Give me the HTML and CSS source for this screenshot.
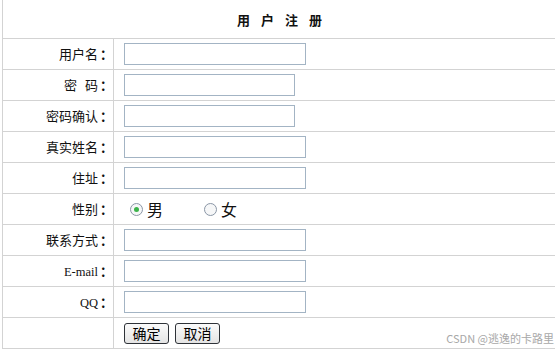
FILE: index.html
```html
<!DOCTYPE html>
<html lang="zh">
<head>
<meta charset="utf-8">
<link rel="stylesheet" href="styles.css">
</head>
<body>
<table class="reg">
  <tr class="title-row"><th colspan="2">用 户 注 册</th></tr>
  <tr><td class="lbl">用户名<b>：</b></td><td class="fld"><input class="w182" type="text"></td></tr>
  <tr><td class="lbl"><span class="sp">密 码</span><b>：</b></td><td class="fld"><input class="w171" type="password"></td></tr>
  <tr><td class="lbl">密码确认<b>：</b></td><td class="fld"><input class="w171" type="password"></td></tr>
  <tr><td class="lbl">真实姓名<b>：</b></td><td class="fld"><input class="w182" type="text"></td></tr>
  <tr><td class="lbl">住址<b>：</b></td><td class="fld"><input class="w182" type="text"></td></tr>
  <tr><td class="lbl">性别<b>：</b></td><td class="fld">
    <div class="sex">
      <label class="opt"><span class="radio on"></span>男</label>
      <label class="opt"><span class="radio"></span>女</label>
    </div>
  </td></tr>
  <tr><td class="lbl">联系方式<b>：</b></td><td class="fld"><input class="w182" type="text"></td></tr>
  <tr><td class="lbl"><span class="latin">E-mail</span><b>：</b></td><td class="fld"><input class="w182" type="text"></td></tr>
  <tr><td class="lbl"><span class="latin">QQ</span><b>：</b></td><td class="fld"><input class="w182" type="text"></td></tr>
  <tr class="btn-row"><td class="lbl"></td><td class="fld">
    <div class="btns"><button class="btn">确定</button><button class="btn">取消</button></div>
    <span class="mark">CSDN @逃逸的卡路里</span>
  </td></tr>
</table>
</body>
</html>
```
FILE: styles.css
```css
html, body {
  margin: 0;
  padding: 0;
  background: #fff;
}
body {
  padding-left: 2px;
  font-family: "Noto Sans CJK SC", "Noto Sans", sans-serif;
  font-size: 13px;
  color: #111;
}
.reg {
  width: 554px;
  border-collapse: collapse;
  margin-top: -1px;
}
.reg th, .reg td {
  border: 1px solid #d3d3d3;
  padding: 0;
}
.reg td:last-child, .reg th { border-right: none; }
.title-row th {
  height: 38px;
  font-size: 13px;
  font-weight: bold;
  text-align: center;
  padding-left: 0;
  word-spacing: 8px;
}
.reg tr { height: 31px; }
.lbl {
  width: 105px;
  text-align: right;
  padding-right: 5px !important;
  white-space: nowrap;
  line-height: 16px;
}
.lbl b {
  font-weight: bold;
  display: inline-block;
  width: 8px;
  margin-left: 2px;
}
.sp { word-spacing: 5px; }
.latin {
  font-family: "Liberation Serif", serif;
  font-size: 12.5px;
}
.fld {
  padding-left: 10px !important;
  position: relative;
}
.fld input {
  display: block;
  box-sizing: border-box;
  height: 22px;
  margin: 0;
  border: 1px solid #a3b4c4;
  background: #fff;
  outline: none;
}
.w182 { width: 182px; }
.w171 { width: 171px; }
.sex {
  display: flex;
  align-items: center;
  gap: 41px;
  padding-left: 6px;
  font-size: 16px;
}
.opt {
  display: flex;
  align-items: center;
  gap: 4px;
}
.radio {
  box-sizing: border-box;
  width: 13px;
  height: 13px;
  border-radius: 50%;
  border: 1px solid #8a96a6;
  background: #f6f7f8;
  display: flex;
  align-items: center;
  justify-content: center;
}
.radio.on::after {
  content: "";
  width: 5px;
  height: 5px;
  border-radius: 50%;
  background: #3bb34a;
}
.btns {
  display: flex;
  gap: 6px;
  padding-top: 4px;
  padding-bottom: 4px;
}
.btn {
  box-sizing: border-box;
  width: 45px;
  height: 21px;
  padding: 0;
  font-family: "Noto Sans CJK SC", sans-serif;
  font-size: 14px;
  line-height: 17px;
  color: #000;
  border: 1px solid #2e3238;
  border-radius: 3px;
  background: linear-gradient(#fbfbfb, #e4e4e4);
}
.mark {
  position: absolute;
  right: 2px;
  bottom: 2px;
  font-size: 11px;
  color: #a8a8a8;
  font-family: "Noto Sans CJK SC", sans-serif;
}
```
